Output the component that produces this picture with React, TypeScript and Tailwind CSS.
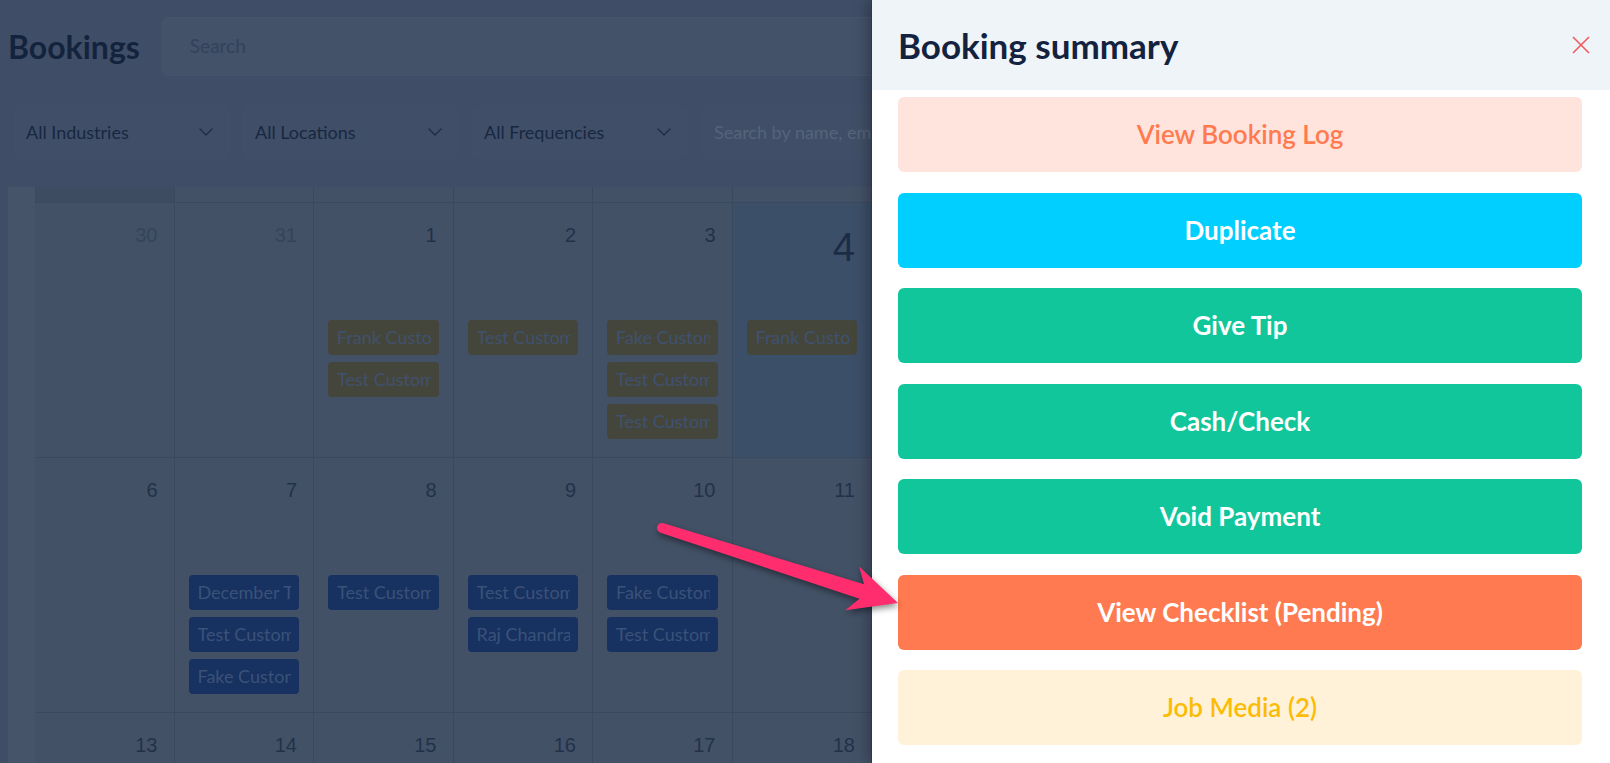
import React from "react";
import { ChevronDown } from "lucide-react";

type Ev = { t: string; c: "olive" | "blue" };
type Cell = { n: string; muted?: boolean; today?: boolean; ev: Ev[] };

const o = (t: string): Ev => ({ t, c: "olive" });
const b = (t: string): Ev => ({ t, c: "blue" });

const rows: Cell[][] = [
  [
    { n: "30", muted: true, ev: [] },
    { n: "31", muted: true, ev: [] },
    { n: "1", ev: [o("Frank Customer"), o("Test Customer")] },
    { n: "2", ev: [o("Test Customer")] },
    { n: "3", ev: [o("Fake Customer"), o("Test Customer"), o("Test Customer")] },
    { n: "4", today: true, ev: [o("Frank Customer")] },
    { n: "5", ev: [] },
  ],
  [
    { n: "6", ev: [] },
    { n: "7", ev: [b("December Test"), b("Test Customer"), b("Fake Customer")] },
    { n: "8", ev: [b("Test Customer")] },
    { n: "9", ev: [b("Test Customer"), b("Raj Chandra")] },
    { n: "10", ev: [b("Fake Customer"), b("Test Customer")] },
    { n: "11", ev: [] },
    { n: "12", ev: [] },
  ],
  [
    { n: "13", ev: [] },
    { n: "14", ev: [] },
    { n: "15", ev: [] },
    { n: "16", ev: [] },
    { n: "17", ev: [] },
    { n: "18", ev: [] },
    { n: "19", ev: [] },
  ],
];

function Select({ label }: { label: string }) {
  return (
    <div className="flex h-[52px] w-[216px] shrink-0 items-center justify-between rounded-[6px] border border-[#415068] bg-[#404f67] pl-[11px] pr-[11px]">
      <span className="text-[18px] text-[#182741]">{label}</span>
      <ChevronDown size={24} strokeWidth={1.4} className="text-[#1d2c46]" />
    </div>
  );
}

function DayCell({ c }: { c: Cell }) {
  return (
    <div
      className={`flex h-[255px] flex-col border-r border-b border-[#3b495e] px-[14px] pt-[18px] ${
        c.today ? "bg-[#3c4f68]" : "bg-[#435166]"
      }`}
    >
      <div className="h-[99px] pr-[2px] text-right font-['Liberation_Sans',sans-serif]">
        {c.today ? (
          <span className="mt-[2px] block text-[40px] leading-[48px] text-[#1d2c46]">{c.n}</span>
        ) : (
          <span
            className={`block text-[20px] leading-[28px] ${
              c.muted ? "text-[#35445b]" : "text-[#22314a]"
            }`}
          >
            {c.n}
          </span>
        )}
      </div>
      <div className="flex flex-col gap-[7px]">
        {c.ev.map((e, i) => (
          <div
            key={i}
            className={`flex h-[35px] items-center overflow-hidden whitespace-nowrap rounded-[4px] pl-[9px] pr-[8px] text-[18px] ${
              e.c === "olive" ? "bg-[#45463b] text-[#3f5170]" : "bg-[#173161] text-[#3b5178]"
            }`}
          >
            <span className="block overflow-hidden">{e.t}</span>
          </div>
        ))}
      </div>
    </div>
  );
}

function ActionButton({ label, cls }: { label: string; cls: string }) {
  return (
    <div className={`flex h-[75px] items-center justify-center rounded-[6px] text-[26px] ${cls}`}>{label}</div>
  );
}

export default function App() {
  const L = 247.6;
  return (
    <div className="relative h-[763px] w-[1610px] overflow-hidden bg-[#3f4e66] font-['Lato',sans-serif]">
      {/* top bar */}
      <div className="mt-[17px] flex h-[59px] items-center pl-[8px]">
        <h1 className="text-[32px] font-bold leading-none text-[#14233d]">Bookings</h1>
        <div className="ml-[22px] mr-[8px] flex h-[59px] flex-1 items-center rounded-[6px] border border-[#46546b] bg-[#435169] pl-[27px]">
          <span className="text-[19px] text-[#33425b]">Search</span>
        </div>
      </div>

      {/* filters */}
      <div className="mt-[30px] flex h-[52px] gap-[13px] pl-[14px]">
        <Select label="All Industries" />
        <Select label="All Locations" />
        <Select label="All Frequencies" />
        <div className="mr-[8px] flex h-[52px] flex-1 items-center rounded-[6px] border border-[#415068] bg-[#404f67] pl-[12px]">
          <span className="whitespace-nowrap text-[18px] text-[#56637a]">Search by name, email, phone</span>
        </div>
      </div>

      {/* calendar */}
      <div className="ml-[8px] mt-[29px] flex">
        <div className="w-[27px] shrink-0 bg-[#46546a]" />
        <div className="grid grid-cols-[repeat(7,139.5px)]">
          {Array.from({ length: 7 }).map((_, i) => (
            <div
              key={i}
              className={`h-[16px] border-r border-b border-[#3b495e] ${i === 0 ? "bg-[#3e4c61]" : "bg-[#435166]"}`}
            />
          ))}
          {rows.flat().map((c, i) => (
            <DayCell key={i} c={c} />
          ))}
        </div>
      </div>

      {/* side panel */}
      <div className="absolute inset-y-0 right-0 flex w-[739px] flex-col border-l border-[#2b394e] bg-white shadow-[-4px_0_12px_rgba(0,0,0,0.25)]">
        <div className="flex h-[90px] shrink-0 items-center justify-between bg-[#eff4f9] pl-[26px] pr-[18px]">
          <h2 className="text-[35px] font-bold leading-none text-[#13233f]">Booking summary</h2>
          <svg width="22" height="22" viewBox="0 0 22 22">
            <path d="M3 3 L19 19 M19 3 L3 19" stroke="#ef5a5a" strokeWidth="1.6" fill="none" />
          </svg>
        </div>
        <div className="mt-[7px] flex flex-col gap-[20.5px] pl-[26px] pr-[28px]">
          <ActionButton label="View Booking Log" cls="bg-[#ffe4de] text-[#ff7a4e] font-semibold" />
          <ActionButton label="Duplicate" cls="bg-[#00cfff] text-white font-bold" />
          <ActionButton label="Give Tip" cls="bg-[#12c69b] text-white font-bold" />
          <ActionButton label="Cash/Check" cls="bg-[#12c69b] text-white font-bold" />
          <ActionButton label="Void Payment" cls="bg-[#12c69b] text-white font-bold" />
          <ActionButton label="View Checklist (Pending)" cls="bg-[#ff7a50] text-white font-bold" />
          <ActionButton label="Job Media (2)" cls="bg-[#fff2d9] text-[#fcbc05] font-semibold" />
        </div>
      </div>

      {/* annotation arrow */}
      <svg
        className="pointer-events-none absolute left-0 top-0 drop-shadow-[1px_3px_3px_rgba(0,0,0,0.45)]"
        width="1610"
        height="763"
      >
        <g transform="translate(662 528) rotate(17.63)">
          <path
            d={`M0 -5 L${L - 38} -7.5 L${L - 48} -23 L${L} 0 L${L - 48} 23 L${L - 38} 7.5 L0 5 A5 5 0 0 1 0 -5 Z`}
            fill="#ff2d6e"
          />
        </g>
      </svg>
    </div>
  );
}
